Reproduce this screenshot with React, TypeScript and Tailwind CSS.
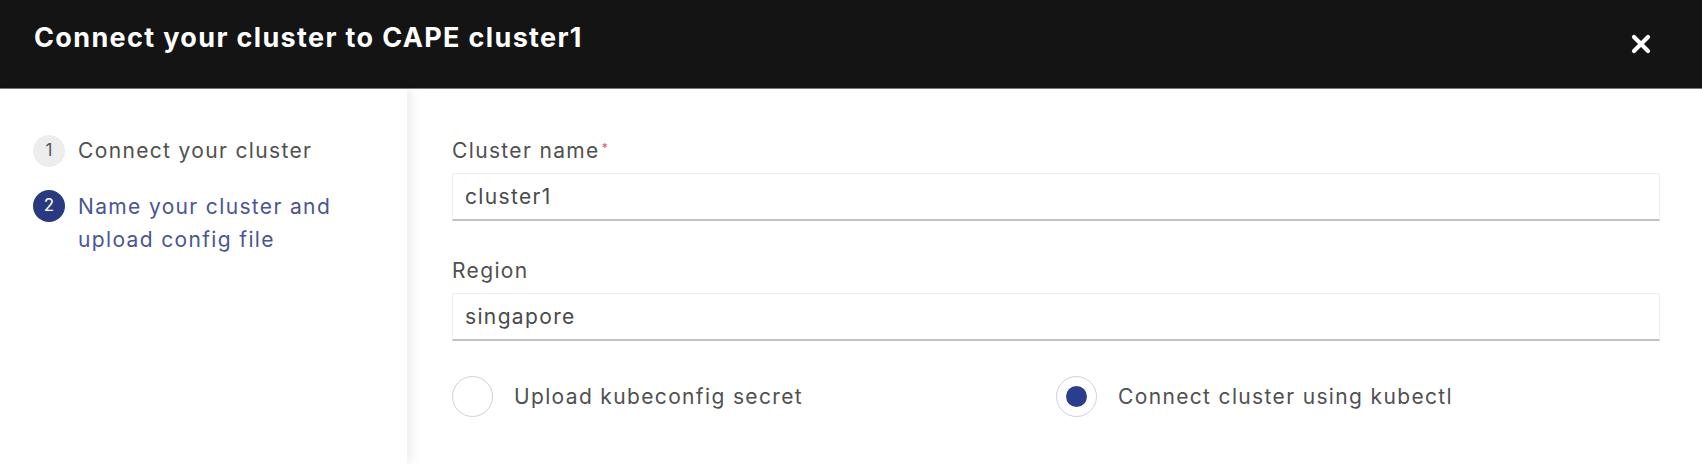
import type { ReactNode } from 'react';

const FONT = 'font-["Inter","Noto_Sans",sans-serif]';

interface Step {
  n: number;
  label: ReactNode;
  active?: boolean;
}

const STEPS: Step[] = [
  { n: 1, label: 'Connect your cluster' },
  {
    n: 2,
    label: (
      <>
        Name your cluster and
        <br />
        upload config file
      </>
    ),
    active: true,
  },
];

function CloseIcon() {
  return (
    <svg width="22" height="22" viewBox="0 0 22 22" aria-hidden="true">
      <path d="M4 4 L18 18 M18 4 L4 18" stroke="#ffffff" strokeWidth="4.2" strokeLinecap="round" />
    </svg>
  );
}

function StepItem({ step }: { step: Step }) {
  return (
    <li className="flex items-start gap-[13px]">
      <span
        className={
          step.active
            ? 'flex h-8 w-8 shrink-0 items-center justify-center rounded-full bg-[#2a3a80] text-[17px] text-white'
            : 'flex h-8 w-8 shrink-0 items-center justify-center rounded-full bg-[#ededed] text-[17px] text-[#555555]'
        }
      >
        {step.n}
      </span>
      <span
        className={
          step.active
            ? 'text-[21px] leading-[33px] tracking-[1.35px] text-[#4a5595]'
            : 'text-[21px] leading-8 tracking-[1.35px] text-[#505050]'
        }
      >
        {step.label}
      </span>
    </li>
  );
}

function Field({ label, value, required }: { label: string; value: string; required?: boolean }) {
  return (
    <div className="flex flex-col gap-[10px]">
      <label className="text-[21px] leading-6 tracking-[1.35px] text-[#505050]">
        {label}
        {required && <sup className="ml-[2px] text-[12px] text-[#e0556a]">*</sup>}
      </label>
      <div className="flex h-12 items-center border border-b-2 border-[#efefef] border-b-[#c2c2c2] px-3 text-[21px] tracking-[1.35px] text-[#4a4a4a]">
        {value}
      </div>
    </div>
  );
}

function Radio({ label, checked }: { label: string; checked?: boolean }) {
  return (
    <label className="flex items-center gap-[21px]">
      <span className="flex h-[41px] w-[41px] items-center justify-center rounded-full border-[1.5px] border-[#cfd0de] bg-white">
        {checked && <span className="h-[21px] w-[21px] rounded-full bg-[#2b3d8d]" />}
      </span>
      <span className="text-[21px] tracking-[1.35px] text-[#505050]">{label}</span>
    </label>
  );
}

export default function App() {
  return (
    <div className={`${FONT} h-[464px] w-[1702px] overflow-hidden bg-white`}>
      <header className="flex h-[89px] items-center justify-between border-b border-[#7a7a7a] bg-[#141414] pl-[34px] pr-[50px]">
        <h1 className="pb-[12px] text-[27px] font-bold tracking-[1.35px] text-white">
          Connect your cluster to CAPE cluster1
        </h1>
        <button type="button" aria-label="Close" className="flex items-center">
          <CloseIcon />
        </button>
      </header>
      <div className="flex h-[375px]">
        <aside className="relative z-10 w-[407px] shrink-0 bg-white pl-[33px] pt-[46px] shadow-[5px_0_10px_rgba(0,0,0,0.07)]">
          <ol className="flex flex-col gap-[23px]">
            {STEPS.map((s) => (
              <StepItem key={s.n} step={s} />
            ))}
          </ol>
        </aside>
        <main className="flex flex-1 flex-col pl-[45px] pr-[42px] pt-[50px]">
          <div className="flex flex-col gap-[38px]">
            <Field label="Cluster name" value="cluster1" required />
            <Field label="Region" value="singapore" />
          </div>
          <div className="mt-[35px] grid grid-cols-2">
            <Radio label="Upload kubeconfig secret" />
            <Radio label="Connect cluster using kubectl" checked />
          </div>
        </main>
      </div>
    </div>
  );
}
